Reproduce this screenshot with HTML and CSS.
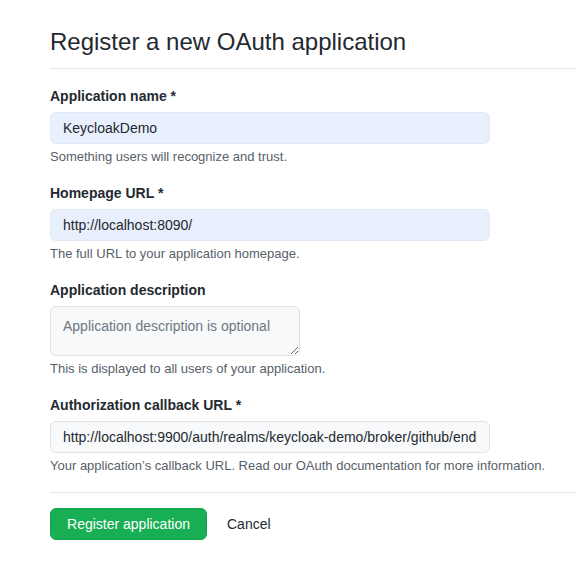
FILE: index.html
```html
<!DOCTYPE html>
<html lang="en">
<head>
<meta charset="utf-8">
<title>Register a new OAuth application</title>
<link rel="stylesheet" href="styles.css">
</head>
<body>
<main class="page">
  <h1 class="title">Register a new OAuth application</h1>
  <form class="form">
    <div class="group">
      <label class="label" for="name">Application name <span class="req">*</span></label>
      <input class="input autofill" id="name" type="text" value="KeycloakDemo">
      <p class="note">Something users will recognize and trust.</p>
    </div>
    <div class="group">
      <label class="label" for="home">Homepage URL <span class="req">*</span></label>
      <input class="input autofill" id="home" type="text" value="http://localhost:8090/">
      <p class="note">The full URL to your application homepage.</p>
    </div>
    <div class="group">
      <label class="label" for="desc">Application description</label>
      <textarea class="textarea" id="desc" placeholder="Application description is optional"></textarea>
      <p class="note">This is displayed to all users of your application.</p>
    </div>
    <div class="group">
      <label class="label" for="cb">Authorization callback URL <span class="req">*</span></label>
      <input class="input" id="cb" type="text" value="http://localhost:9900/auth/realms/keycloak-demo/broker/github/endpoint">
      <p class="note">Your application’s callback URL. Read our <a class="link" href="#">OAuth documentation</a> for more information.</p>
    </div>
    <div class="actions">
      <button class="btn-primary" type="button">Register application</button>
      <a class="cancel" href="#">Cancel</a>
    </div>
  </form>
</main>
</body>
</html>
```

FILE: styles.css
```css
* { box-sizing: border-box; }
html, body { margin: 0; padding: 0; background: #ffffff; }
body {
  font-family: "Liberation Sans", Arial, sans-serif;
  color: #24292f;
  overflow: hidden;
}
.page {
  padding: 26px 0 0 50px;
  width: 600px;
}
.title {
  margin: 0;
  font-size: 24px;
  font-weight: 400;
  line-height: 32px;
  padding-bottom: 10px;
  border-bottom: 1px solid #e4e7ea;
  color: #24292f;
}
.form {
  display: flex;
  flex-direction: column;
  padding-top: 17px;
}
.group {
  display: flex;
  flex-direction: column;
  align-items: flex-start;
  margin-bottom: 17px;
}
.label {
  font-size: 14px;
  font-weight: 700;
  line-height: 20px;
  margin-bottom: 6px;
  color: #24292f;
}
.input, .textarea {
  font-family: "Liberation Sans", Arial, sans-serif;
  font-size: 14px;
  color: #24292f;
  border: 1px solid #dfe3e8;
  border-radius: 6px;
  background: #f8f9fb;
  padding: 0 12px;
  outline: none;
}
.input {
  width: 440px;
  height: 32px;
  line-height: 20px;
}
.autofill {
  background: #e8effd;
  border-color: #e2e8f5;
}
.textarea {
  width: 250px;
  height: 50px;
  padding: 9px 12px;
  line-height: 20px;
  resize: vertical;
}
.textarea::placeholder { color: #6e7781; }
.note {
  margin: 4px 0 0;
  font-size: 13px;
  line-height: 18px;
  color: #57606a;
}
.link { color: #57606a; text-decoration: none; }
.actions {
  display: flex;
  align-items: center;
  gap: 20px;
  border-top: 1px solid #e4e7ea;
  padding-top: 15px;
}
.btn-primary {
  font-family: "Liberation Sans", Arial, sans-serif;
  font-size: 14px;
  line-height: 20px;
  height: 32px;
  padding: 0 16px;
  width: 157px;
  color: #ffffff;
  background: #18af54;
  border: 1px solid #14a34c;
  border-radius: 6px;
}
.cancel {
  font-size: 14px;
  color: #24292f;
  text-decoration: none;
}
```
